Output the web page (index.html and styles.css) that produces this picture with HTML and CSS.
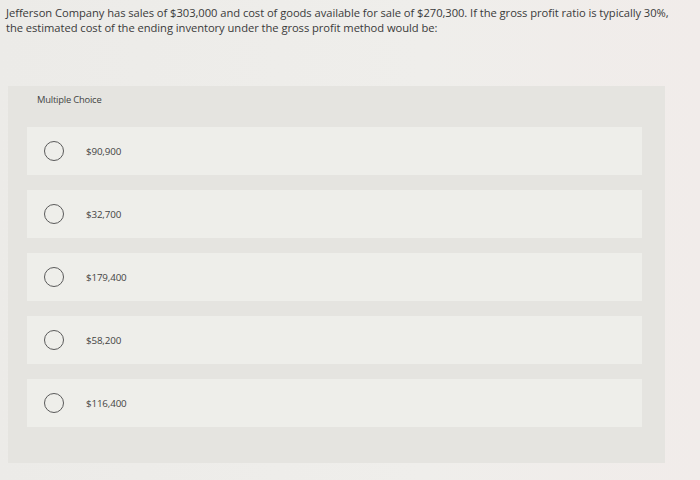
FILE: index.html
```html
<!DOCTYPE html>
<html>
<head>
<meta charset="utf-8">
<link rel="stylesheet" href="styles.css">
</head>
<body>
<div class="page">
  <p class="question">Jefferson Company has sales of $303,000 and cost of goods available for sale of $270,300. If the gross profit ratio is typically 30%, the estimated cost of the ending inventory under the gross profit method would be:</p>
  <div class="panel">
    <div class="panel-title">Multiple Choice</div>
    <div class="options">
      <div class="option"><span class="radio"></span><span class="label">$90,900</span></div>
      <div class="option"><span class="radio"></span><span class="label">$32,700</span></div>
      <div class="option"><span class="radio"></span><span class="label">$179,400</span></div>
      <div class="option"><span class="radio"></span><span class="label">$58,200</span></div>
      <div class="option"><span class="radio"></span><span class="label">$116,400</span></div>
    </div>
  </div>
</div>
</body>
</html>
```
FILE: styles.css
```css
html, body {
  margin: 0;
  padding: 0;
}
body {
  width: 700px;
  height: 480px;
  overflow: hidden;
  background: linear-gradient(90deg, #ecebe8 0%, #efeeeb 60%, #f1ecea 100%);
  font-family: "Open Sans", Lato, sans-serif;
  color: #3a3a3a;
}
.page {
  padding: 5px 0 0 6px;
}
.question {
  margin: 0;
  width: 674px;
  font-size: 11.2px;
  line-height: 15px;
  letter-spacing: -0.05px;
  color: #3a3a3a;
}
.panel {
  margin-top: 51px;
  margin-left: 2px;
  width: 657px;
  height: 377px;
  background: #e5e4e0;
  box-sizing: border-box;
  padding: 7px 0 0 19px;
}
.panel-title {
  font-size: 9.4px;
  letter-spacing: -0.2px;
  color: #444;
  padding-left: 10px;
  height: 34px;
  line-height: 13px;
}
.options {
  display: flex;
  flex-direction: column;
  gap: 15px;
  width: 615px;
}
.option {
  height: 48px;
  background: #eeeeea;
  display: flex;
  align-items: center;
  padding-left: 17px;
}
.radio {
  width: 20px;
  height: 20px;
  border: 1.4px solid #5a5a5a;
  border-radius: 50%;
  box-sizing: border-box;
  flex: none;
}
.label {
  margin-left: 22px;
  font-size: 9.8px;
  letter-spacing: -0.15px;
  color: #444;
}
```
